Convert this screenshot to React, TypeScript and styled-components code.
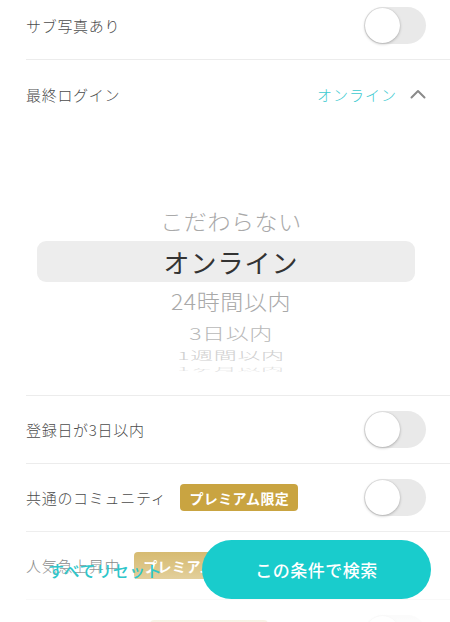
import React from "react";
import styled, { createGlobalStyle } from "styled-components";

const options = [
  { label: "こだわらない", h: 39, scale: 0.92, color: "#a9a9a9" },
  { label: "オンライン", h: 41, scale: 1, color: "#333", selected: true },
  { label: "24時間以内", h: 38, scale: 0.92, color: "#a9a9a9" },
  { label: "3日以内", h: 26, scale: 0.72, color: "#b8b8b8" },
  { label: "1週間以内", h: 18, scale: 0.48, color: "#cfcfcf" },
  { label: "1ヶ月以内", h: 8, scale: 0.22, color: "#e0e0e0" },
];

const App = () => {
  return (
    <>
      <GlobalStyle />
      <Page>
        <List>
          <Row>
            <Label>サブ写真あり</Label>
            <Toggle />
          </Row>
          <Expand>
            <Header>
              <Label>最終ログイン</Label>
              <Value>
                オンライン
                <svg width="16" height="10" viewBox="0 0 16 10">
                  <path d="M1.5 8.5 L8 2 L14.5 8.5" fill="none" stroke="#8a8a8a" strokeWidth="2" strokeLinecap="round" strokeLinejoin="round" />
                </svg>
              </Value>
            </Header>
            <Picker>
              {options.map((o) => (
                <Option key={o.label} $h={o.h} $selected={!!o.selected}>
                  <OptionText $scale={o.scale} $color={o.color} $selected={!!o.selected}>
                    {o.label}
                  </OptionText>
                </Option>
              ))}
            </Picker>
          </Expand>
          <Row>
            <Label>登録日が3日以内</Label>
            <Toggle />
          </Row>
          <Row>
            <LabelGroup>
              <Label>共通のコミュニティ</Label>
              <Badge>プレミアム限定</Badge>
            </LabelGroup>
            <Toggle />
          </Row>
          <Row>
            <LabelGroup>
              <Label>人気急上昇中</Label>
              <Badge>プレミアム限定</Badge>
            </LabelGroup>
            <Toggle />
          </Row>
          <Row>
            <LabelGroup>
              <Label>自己紹介文あり</Label>
              <Badge>プレミアム限定</Badge>
            </LabelGroup>
            <Toggle />
          </Row>
        </List>
        <BottomBar>
          <ResetLink>すべてリセット</ResetLink>
          <SearchBtn>この条件で検索</SearchBtn>
        </BottomBar>
      </Page>
    </>
  );
};
export default App;

const Toggle = () => (
  <Track>
    <Knob />
  </Track>
);

// styled-components -----------------
const GlobalStyle = createGlobalStyle`
  html, body {
    margin: 0;
    padding: 0;
    background: #fff;
    overflow: hidden;
  }
  body {
    font-family: "Noto Sans CJK JP", "Noto Sans", sans-serif;
  }
`;

const Page = styled.div`
  width: 450px;
  height: 622px;
  overflow: hidden;
  position: relative;
  background: #fff;
`;

const List = styled.div`
  margin-top: -8px;
  padding-left: 26px;
`;

const Row = styled.div`
  height: 68px;
  box-sizing: border-box;
  display: flex;
  align-items: center;
  justify-content: space-between;
  padding-right: 24px;
  border-bottom: 1px solid #ececec;
`;

const Label = styled.div`
  font-size: 15px;
  font-weight: 300;
  letter-spacing: 0.7px;
  color: #4c4c4c;
  white-space: nowrap;
`;

const LabelGroup = styled.div`
  display: flex;
  align-items: center;
  gap: 14px;
`;

const Badge = styled.div`
  background: #c9a441;
  color: #fff;
  font-size: 14px;
  font-weight: bold;
  letter-spacing: 0.4px;
  height: 27px;
  padding: 0 9px;
  border-radius: 4px;
  display: flex;
  align-items: center;
`;

const Track = styled.div`
  width: 62px;
  height: 37px;
  border-radius: 19px;
  background: #e9e9e9;
  display: flex;
  align-items: center;
  padding-left: 1px;
  box-sizing: border-box;
`;

const Knob = styled.div`
  width: 35px;
  height: 35px;
  border-radius: 50%;
  background: #fff;
  box-shadow: 0 1px 3px rgba(0, 0, 0, 0.25), 0 0 1px rgba(0, 0, 0, 0.15);
`;

const Expand = styled.div`
  border-bottom: 1px solid #ececec;
`;

const Header = styled.div`
  height: 68px;
  display: flex;
  align-items: center;
  justify-content: space-between;
  padding-right: 24px;
`;

const Value = styled.div`
  display: flex;
  align-items: center;
  gap: 13px;
  font-size: 15px;
  font-weight: 300;
  letter-spacing: 1px;
  color: #3ccad0;
`;

const Picker = styled.div`
  height: 267px;
  box-sizing: border-box;
  padding: 74px 35px 0 11px;
  display: flex;
  flex-direction: column;
  overflow: hidden;
`;

const Option = styled.div<{ $h: number; $selected: boolean }>`
  height: ${(p) => p.$h}px;
  flex-shrink: 0;
  display: flex;
  align-items: center;
  justify-content: center;
  padding-left: 10px;
  border-radius: 9px;
  background: ${(p) => (p.$selected ? "#ededed" : "transparent")};
`;

const OptionText = styled.div<{ $scale: number; $color: string; $selected: boolean }>`
  font-size: ${(p) => (p.$selected ? 26 : 23)}px;
  font-weight: ${(p) => (p.$selected ? 400 : 300)};
  letter-spacing: ${(p) => (p.$selected ? 1 : 0.6)}px;
  color: ${(p) => p.$color};
  line-height: 1;
  white-space: nowrap;
  transform: scaleY(${(p) => p.$scale});
`;

const BottomBar = styled.div`
  position: absolute;
  left: 0;
  right: 0;
  bottom: 0;
  height: 104px;
  box-sizing: border-box;
  padding: 0 19px 23px 48px;
  display: flex;
  align-items: flex-end;
  justify-content: space-between;
  background: linear-gradient(
    to bottom,
    rgba(255, 255, 255, 0) 0%,
    rgba(255, 255, 255, 0.35) 45%,
    rgba(255, 255, 255, 0.88) 100%
  );
`;

const ResetLink = styled.div`
  font-size: 16px;
  font-weight: 500;
  color: #2fc6ca;
  letter-spacing: 0.6px;
  height: 59px;
  display: flex;
  align-items: center;
  padding-top: 2px;
  cursor: pointer;
`;

const SearchBtn = styled.button`
  width: 229px;
  height: 59px;
  border: none;
  border-radius: 30px;
  background: #19cccc;
  color: #fff;
  font-family: "Noto Sans CJK JP", "Noto Sans", sans-serif;
  font-size: 17px;
  font-weight: 500;
  letter-spacing: 0.5px;
  cursor: pointer;
`;
